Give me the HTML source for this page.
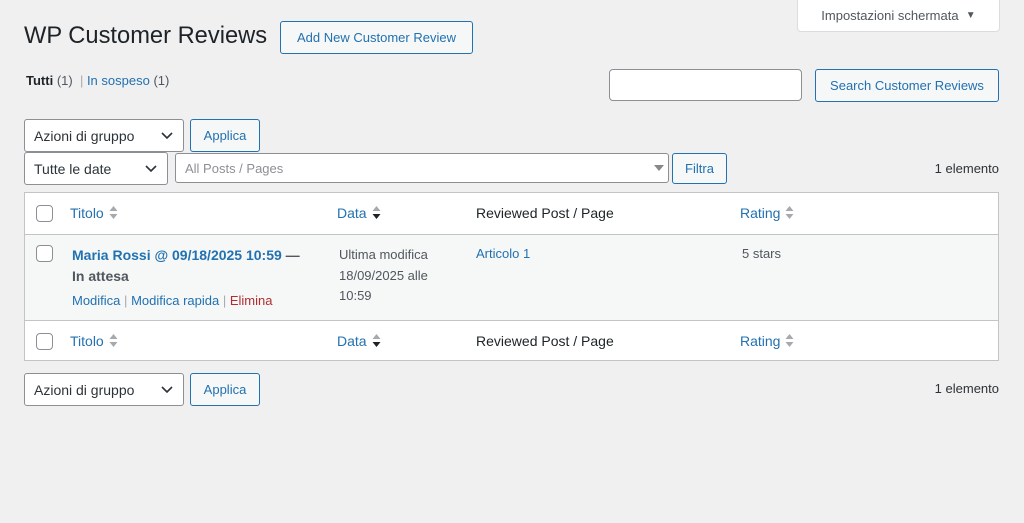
<!DOCTYPE html>
<html><head><meta charset="utf-8"><style>
*{box-sizing:border-box}
body{margin:0;width:1024px;height:523px;background:#f0f0f1;font-family:"Liberation Sans",Arial,sans-serif;font-size:13px;color:#3c434a;position:relative;overflow:hidden}
.a{position:absolute}
.btn{position:absolute;border:1px solid #2271b1;color:#2271b1;background:#f6f7f7;border-radius:3px;display:flex;align-items:center;justify-content:center;font-size:13px}
.sel{position:absolute;border:1px solid #8c8f94;background:#fff;border-radius:3px;font-size:14px;color:#2c3338;display:flex;align-items:center;padding-left:9px}
.sel svg{position:absolute;right:10px;top:50%;margin-top:-4px}
.link{color:#2271b1}
.cb{position:absolute;width:17px;height:17px;border:1px solid #8c8f94;border-radius:4px;background:#fff}
.th{position:absolute;font-size:14px}
.sort{display:inline-block;vertical-align:middle;margin-left:5px}
</style></head><body>
<div class="a" style="left:797px;top:-1px;width:203px;height:33px;background:#fff;border:1px solid #dcdcde;border-radius:0 0 4px 4px;color:#50575e;font-size:13px;display:flex;align-items:center;justify-content:center">Impostazioni schermata&nbsp;&nbsp;<span style="font-size:10px">▼</span></div>
<div class="a" style="left:24px;top:23px;font-size:23.7px;color:#1d2327">WP Customer Reviews</div>
<div class="btn" style="left:280px;top:21px;width:193px;height:33px">Add New Customer Review</div>
<div class="a" style="left:26px;top:73px"><b style="color:#1d2327">Tutti</b> <span style="color:#50575e">(1)</span> <span style="color:#a7aaad">&nbsp;|&nbsp;</span><span class="link">In sospeso</span> <span style="color:#50575e">(1)</span></div>
<div class="a" style="left:609px;top:69px;width:193px;height:32px;background:#fff;border:1px solid #8c8f94;border-radius:4px"></div>
<div class="btn" style="left:815px;top:69px;width:184px;height:33px">Search Customer Reviews</div>
<div class="sel" style="left:24px;top:119px;width:160px;height:33px">Azioni di gruppo<svg width="12" height="8"><path d="M1 1l5 5 5-5" fill="none" stroke="#2c3338" stroke-width="1.6"/></svg></div>
<div class="btn" style="left:190px;top:119px;width:70px;height:33px">Applica</div>
<div class="sel" style="left:24px;top:152px;width:144px;height:33px">Tutte le date<svg width="12" height="8"><path d="M1 1l5 5 5-5" fill="none" stroke="#2c3338" stroke-width="1.6"/></svg></div>
<div class="sel" style="left:175px;top:153px;width:494px;height:30px;color:#8c8f94;font-size:13px">All Posts / Pages<svg width="10" height="6" style="right:4px;margin-top:-3px"><path d="M0 0h10L5 6z" fill="#888"/></svg></div>
<div class="btn" style="left:672px;top:153px;width:55px;height:31px">Filtra</div>
<div class="a" style="right:25px;top:161px;color:#2c3338">1 elemento</div>
<div class="a" style="left:24px;top:192px;width:975px;height:169px;background:#fff;border:1px solid #c3c4c7"></div>
<div class="a" style="left:25px;top:234px;width:973px;height:87px;background:#f6f7f7;border-top:1px solid #c3c4c7;border-bottom:1px solid #c3c4c7"></div>
<div class="cb" style="left:36px;top:205px"></div>
<div class="th link" style="left:70px;top:205px">Titolo<span class="sort"><svg width="9" height="15"><path d="M0.5 6L4.5 1 8.5 6zM0.5 9l4 5 4-5z" fill="#a7aaad"/></svg></span></div>
<div class="th link" style="left:337px;top:205px">Data<span class="sort"><svg width="9" height="15"><path d="M0.5 6L4.5 1 8.5 6z" fill="#a7aaad"/><path d="M0.5 9l4 5 4-5z" fill="#1d2327"/></svg></span></div>
<div class="th" style="left:476px;top:205px;color:#1d2327">Reviewed Post / Page</div>
<div class="th link" style="left:740px;top:205px">Rating<span class="sort"><svg width="9" height="15"><path d="M0.5 6L4.5 1 8.5 6zM0.5 9l4 5 4-5z" fill="#a7aaad"/></svg></span></div>
<div class="cb" style="left:36px;top:245px"></div>
<div class="a" style="left:72px;top:245px;font-size:14px;line-height:21px;width:240px"><b class="link">Maria Rossi @ 09/18/2025 10:59</b> <b style="color:#50575e">—<br>In attesa</b></div>
<div class="a" style="left:72px;top:293px"><span class="link">Modifica</span> <span style="color:#a7aaad">|</span> <span class="link">Modifica rapida</span> <span style="color:#a7aaad">|</span> <span style="color:#b32d2e">Elimina</span></div>
<div class="a" style="left:339px;top:245px;line-height:20.5px;color:#50575e">Ultima modifica<br>18/09/2025 alle<br>10:59</div>
<div class="a link" style="left:476px;top:246px">Articolo 1</div>
<div class="a" style="left:742px;top:246px;color:#50575e">5 stars</div>
<div class="cb" style="left:36px;top:333px"></div>
<div class="th link" style="left:70px;top:333px">Titolo<span class="sort"><svg width="9" height="15"><path d="M0.5 6L4.5 1 8.5 6zM0.5 9l4 5 4-5z" fill="#a7aaad"/></svg></span></div>
<div class="th link" style="left:337px;top:333px">Data<span class="sort"><svg width="9" height="15"><path d="M0.5 6L4.5 1 8.5 6z" fill="#a7aaad"/><path d="M0.5 9l4 5 4-5z" fill="#1d2327"/></svg></span></div>
<div class="th" style="left:476px;top:333px;color:#1d2327">Reviewed Post / Page</div>
<div class="th link" style="left:740px;top:333px">Rating<span class="sort"><svg width="9" height="15"><path d="M0.5 6L4.5 1 8.5 6zM0.5 9l4 5 4-5z" fill="#a7aaad"/></svg></span></div>
<div class="sel" style="left:24px;top:373px;width:160px;height:33px">Azioni di gruppo<svg width="12" height="8"><path d="M1 1l5 5 5-5" fill="none" stroke="#2c3338" stroke-width="1.6"/></svg></div>
<div class="btn" style="left:190px;top:373px;width:70px;height:33px">Applica</div>
<div class="a" style="right:25px;top:381px;color:#2c3338">1 elemento</div>
</body></html>
